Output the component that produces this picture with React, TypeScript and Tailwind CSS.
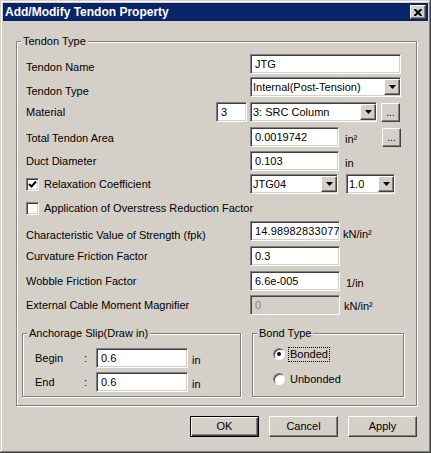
import React from "react";

// classic win2000 bevels
const sunken =
  "border border-t-[#808080] border-l-[#808080] border-b-white border-r-white shadow-[inset_1px_1px_0_#404040,inset_-1px_-1px_0_#d4d0c8]";
const raised =
  "border border-t-white border-l-white border-b-[#404040] border-r-[#404040] shadow-[inset_-1px_-1px_0_#808080]";
const etched =
  "border border-[#808080] shadow-[inset_1px_1px_0_#fff,1px_1px_0_#fff]";

function TextBox({
  value,
  className,
  disabled = false,
}: {
  value: string;
  className: string;
  disabled?: boolean;
}) {
  return (
    <div
      className={`${className} h-[20px] ${sunken} ${
        disabled ? "bg-[#d4d0c8] text-[#808080]" : "bg-white"
      } flex items-center overflow-hidden whitespace-nowrap pl-[4px]`}
    >
      {value}
    </div>
  );
}

function Arrow() {
  return (
    <div className={`flex h-[16px] w-[16px] items-center justify-center bg-[#d4d0c8] ${raised}`}>
      <svg width="7" height="4" viewBox="0 0 7 4">
        <path d="M0 0h7L3.5 4z" fill="#000" />
      </svg>
    </div>
  );
}

function Combo({ value, className }: { value: string; className: string }) {
  return (
    <div className={`${className} h-[20px] ${sunken} flex items-center justify-between bg-white pl-[2px]`}>
      <span className="overflow-hidden whitespace-nowrap">{value}</span>
      <Arrow />
    </div>
  );
}

function Dots() {
  return (
    <div className={`flex h-[19px] w-[19px] items-end justify-center bg-[#d4d0c8] pb-[3px] text-[10px] leading-none ${raised}`}>
      ...
    </div>
  );
}

function Check({ checked }: { checked: boolean }) {
  return (
    <div className={`flex h-[13px] w-[13px] items-center justify-center bg-white ${sunken}`}>
      {checked && (
        <svg width="9" height="9" viewBox="0 0 9 9">
          <path d="M1 4l2.5 2.5L8 1.5" stroke="#000" strokeWidth="2" fill="none" />
        </svg>
      )}
    </div>
  );
}

function Radio({ checked }: { checked: boolean }) {
  return (
    <div className="flex h-[12px] w-[12px] items-center justify-center rounded-full border border-t-[#808080] border-l-[#808080] border-b-white border-r-white bg-white shadow-[inset_1px_1px_0_#404040]">
      {checked && <div className="h-[4px] w-[4px] rounded-full bg-black" />}
    </div>
  );
}

function Unit({ children }: { children: React.ReactNode }) {
  return <span className="ml-[6px] mt-[4px] whitespace-nowrap">{children}</span>;
}

export default function App() {
  return (
    <div className="h-[453px] w-[431px] bg-[#d4d0c8] p-[3px] font-['Liberation_Sans',Arial,sans-serif] text-[11px] text-black shadow-[inset_-1px_-1px_0_#404040,inset_1px_1px_0_#d4d0c8,inset_-2px_-2px_0_#808080,inset_2px_2px_0_#fff]">
      {/* Title bar */}
      <div className="flex h-[18px] items-center justify-between bg-[#0a246a] pl-[2px] pr-[2px]">
        <span className="text-[12px] font-bold text-white">Add/Modify Tendon Property</span>
        <div className={`flex h-[14px] w-[16px] items-center justify-center bg-[#d4d0c8] ${raised}`}>
          <svg width="8" height="7" viewBox="0 0 8 7">
            <path d="M0.5 0l7 7M7.5 0l-7 7" stroke="#000" strokeWidth="2" />
          </svg>
        </div>
      </div>

      {/* Tendon Type group */}
      <fieldset className={`ml-[13px] mt-[14px] w-[401px] p-0 ${etched}`}>
        <legend className="ml-[4px] bg-[#d4d0c8] px-[2px] leading-[13px]">Tendon Type</legend>

        <div className="flex flex-col pl-[9px] pt-[6px]">
          <div className="flex h-[20px] items-center">
            <span className="mt-[6px] w-[224px]">Tendon Name</span>
            <TextBox value="JTG" className="w-[151px]" />
          </div>

          <div className="mt-[3px] flex h-[20px] items-center">
            <span className="mt-[8px] w-[224px]">Tendon Type</span>
            <Combo value="Internal(Post-Tension)" className="w-[151px]" />
          </div>

          <div className="mt-[5px] flex h-[20px] items-center">
            <span className="w-[190px]">Material</span>
            <TextBox value="3" className="w-[31px]" />
            <Combo value="3: SRC Column" className="ml-[3px] w-[127px]" />
            <div className="ml-[4px]">
              <Dots />
            </div>
          </div>

          <div className="mt-[5px] flex h-[20px] items-center">
            <span className="mt-[2px] w-[224px]">Total Tendon Area</span>
            <TextBox value="0.0019742" className="w-[89px]" />
            <span className="mt-[4px] w-[43px] pl-[6px]">in²</span>
            <Dots />
          </div>

          <div className="mt-[4px] flex h-[20px] items-center">
            <span className="w-[224px]">Duct Diameter</span>
            <TextBox value="0.103" className="w-[89px]" />
            <Unit>in</Unit>
          </div>

          <div className="mt-[3px] flex h-[20px] items-center">
            <div className="flex w-[224px] items-center">
              <Check checked />
              <span className="ml-[5px]">Relaxation Coefficient</span>
            </div>
            <Combo value="JTG04" className="w-[88px]" />
            <Combo value="1.0" className="ml-[8px] w-[49px]" />
          </div>

          <div className="mt-[4px] flex h-[20px] items-center">
            <Check checked={false} />
            <span className="ml-[5px]">Application of Overstress Reduction Factor</span>
          </div>

          <div className="mt-[3px] flex h-[20px] items-center">
            <span className="mt-[8px] w-[224px]">Characteristic Value of Strength (fpk)</span>
            <TextBox value="14.98982833077" className="w-[90px] tracking-[0.15px]" />
            <span className="ml-[3px] mt-[6px]">kN/in²</span>
          </div>

          <div className="mt-[5px] flex h-[20px] items-center">
            <span className="w-[224px]">Curvature Friction Factor</span>
            <TextBox value="0.3" className="w-[90px]" />
          </div>

          <div className="mt-[5px] flex h-[20px] items-center">
            <span className="w-[224px]">Wobble Friction Factor</span>
            <TextBox value="6.6e-005" className="w-[90px]" />
            <Unit>1/in</Unit>
          </div>

          <div className="mt-[4px] flex h-[20px] items-center">
            <span className="w-[224px]">External Cable Moment Magnifier</span>
            <TextBox value="0" className="w-[90px]" disabled />
            <span className="ml-[4px] mt-[2px]">kN/in²</span>
          </div>
        </div>

        {/* Bottom groups */}
        <div className="mt-[12px] flex gap-[11px] pb-[8px] pl-[5px]">
          <fieldset className={`w-[219px] p-0 ${etched}`}>
            <legend className="ml-[4px] bg-[#d4d0c8] px-[2px] leading-[13px]">Anchorage Slip(Draw in)</legend>
            <div className="flex flex-col gap-[4px] pb-[4px] pl-[12px] pt-[8px]">
              <div className="flex h-[20px] items-center">
                <span className="w-[49px]">Begin</span>
                <span className="w-[12px]">:</span>
                <TextBox value="0.6" className="w-[92px]" />
                <span className="ml-[4px] mt-[4px]">in</span>
              </div>
              <div className="flex h-[20px] items-center">
                <span className="w-[49px]">End</span>
                <span className="w-[12px]">:</span>
                <TextBox value="0.6" className="w-[92px]" />
                <span className="ml-[4px] mt-[4px]">in</span>
              </div>
            </div>
          </fieldset>

          <fieldset className={`w-[152px] p-0 ${etched}`}>
            <legend className="ml-[4px] bg-[#d4d0c8] px-[2px] leading-[13px]">Bond Type</legend>
            <div className="flex flex-col gap-[5px] pb-[7px] pl-[20px] pt-[4px]">
              <div className="flex h-[20px] items-center">
                <Radio checked />
                <span className="ml-[3px] border border-dotted border-black px-[1px] leading-[13px]">Bonded</span>
              </div>
              <div className="flex h-[20px] items-center">
                <Radio checked={false} />
                <span className="ml-[4px] px-[1px]">Unbonded</span>
              </div>
            </div>
          </fieldset>
        </div>
      </fieldset>

      {/* Buttons */}
      <div className="mr-[11px] mt-[10px] flex justify-end gap-[10px]">
        <button className="flex h-[21px] w-[69px] items-center justify-center border border-black bg-[#d4d0c8] shadow-[inset_1px_1px_0_#fff,inset_-1px_-1px_0_#404040,inset_-2px_-2px_0_#808080]">
          OK
        </button>
        <button className={`flex h-[21px] w-[69px] items-center justify-center bg-[#d4d0c8] ${raised}`}>
          Cancel
        </button>
        <button className={`flex h-[21px] w-[69px] items-center justify-center bg-[#d4d0c8] ${raised}`}>
          Apply
        </button>
      </div>
    </div>
  );
}
